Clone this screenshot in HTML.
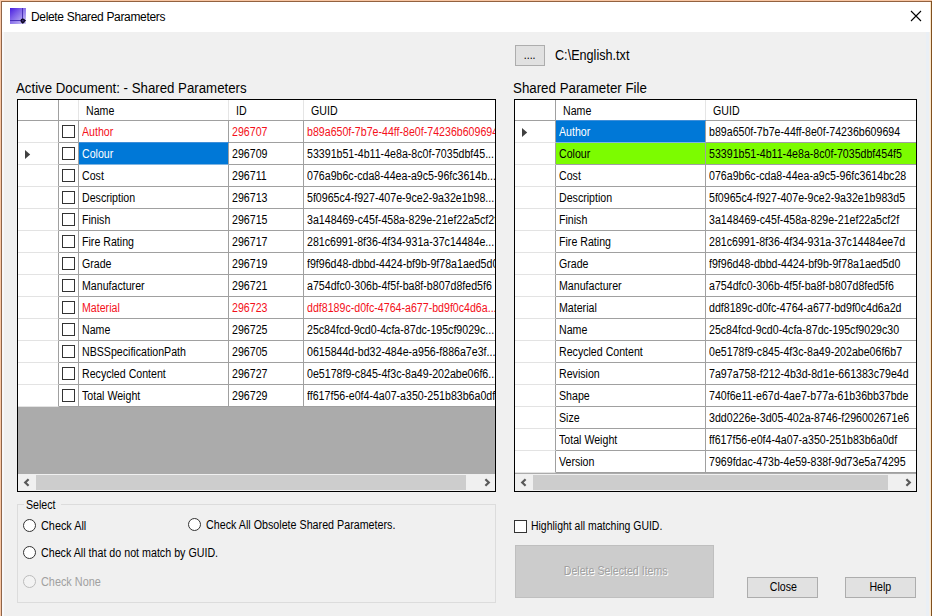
<!DOCTYPE html>
<html><head><meta charset="utf-8"><title>Delete Shared Parameters</title>
<style>
html,body{margin:0;padding:0}
body{width:932px;height:616px;overflow:hidden;background:#f0f0f0;position:relative;
 font-family:"Liberation Sans",sans-serif;font-size:12px;color:#000}
.x{display:inline-block;transform:scaleX(0.885);transform-origin:0 50%;white-space:nowrap}
.xc{display:inline-block;transform:scaleX(0.885);transform-origin:50% 50%;white-space:nowrap}
div,span{box-sizing:border-box}
.abs{position:absolute}
.t{position:absolute;white-space:nowrap;line-height:1}
#titlebar{left:2px;top:2px;width:929px;height:30px;background:#fff}
#title{left:31px;top:11px;font-size:12px;letter-spacing:-0.33px}
.lbl{font-size:14px;transform:scaleX(0.947);transform-origin:0 50%}
.grid{position:absolute;border:1px solid #000;background:#ababab;overflow:hidden}
.hdr{position:absolute;left:0;top:0;height:21px;background:#fff;border-bottom:1px solid #a0a0a0}
.hc{position:absolute;top:0;height:20px;border-right:1px solid #e5e5e5;line-height:20px;padding-left:7px;padding-top:1px;white-space:nowrap;overflow:hidden}
.hc0{border-right:1px solid #a0a0a0}
.row{position:absolute;left:0;height:22px;background:#fff}
.rh{position:absolute;left:0;top:0;height:22px;border-right:1px solid #a0a0a0;border-bottom:1px solid #e3e3e3;background:#fff}
.c{position:absolute;top:0;height:22px;border-right:1px solid #a0a0a0;border-bottom:1px solid #a0a0a0;line-height:21px;padding-left:3px;padding-top:1px;white-space:nowrap;overflow:hidden;background:#fff}
.red{color:#f4101a}
.sel{background:#0078d7;color:#fff;box-shadow:0 -1px 0 #3f8fd9;border-bottom-color:#7fb4e0}
.green{background:#7cfc00}
.cb{position:absolute;width:13px;height:13px;border:1px solid #333;background:#fff}
.tri{position:absolute;width:6px;height:10px}
.sb{position:absolute;left:0;height:17px;background:#f0f0f0}
.thumb{position:absolute;top:1px;height:15px;background:#cdcdcd}
.btn{position:absolute;border:1px solid #adadad;background:#e1e1e1;text-align:center}
.radio{position:absolute;width:13px;height:13px;border:1px solid #333;border-radius:50%;background:#fff}
</style></head>
<body>
<div class="abs" id="titlebar"></div>
<div class="abs" style="left:2px;top:32px;width:2px;height:584px;background:#f8f8fa"></div>
<div class="abs" style="left:926px;top:32px;width:3px;height:584px;background:#eaeff5"></div>
<div class="abs" style="left:929px;top:32px;width:1px;height:584px;background:#f5f0e9"></div>
<div class="abs" style="left:0;top:0;width:932px;height:1px;background:#f8c6a3"></div>
<div class="abs" style="left:1px;top:1px;width:931px;height:1px;background:#93623f"></div>
<div class="abs" style="left:0;top:0;width:1px;height:616px;background:#f8c6a3"></div>
<div class="abs" style="left:1px;top:1px;width:1px;height:615px;background:#8f6448"></div>
<div class="abs" style="left:930px;top:2px;width:1px;height:614px;background:#fde6c8"></div>
<div class="abs" style="left:931px;top:1px;width:1px;height:615px;background:#80501f"></div>
<svg class="abs" style="left:10px;top:8px" width="17" height="17" viewBox="0 0 17 17">
<defs><linearGradient id="ig" x1="0" y1="0" x2="1" y2="1"><stop offset="0" stop-color="#461ce0"/><stop offset="0.35" stop-color="#7b5de8"/><stop offset="0.7" stop-color="#a999f0"/><stop offset="1" stop-color="#d8d2f9"/></linearGradient></defs>
<rect x="0" y="0" width="16" height="16" fill="url(#ig)"/>
<rect x="12" y="0" width="1" height="12" fill="#3d25ae" opacity="0.85"/>
<rect x="0" y="12" width="12" height="1" fill="#3d25ae" opacity="0.85"/>
<circle cx="12.8" cy="12.8" r="1.7" fill="#3a2a78" stroke="#0d0820" stroke-width="1.3"/>
<path d="M14.8 12.6 H16 M12.8 14.8 V15.8" stroke="#0d0820" stroke-width="0.9"/>
</svg>
<div class="t" id="title">Delete Shared Parameters</div>
<svg class="abs" style="left:910px;top:10px" width="12" height="12" viewBox="0 0 12 12"><path d="M1 1 L11 11 M11 1 L1 11" stroke="#000" stroke-width="1.1" fill="none"/></svg>
<div class="t lbl" id="lblL" style="left:16px;top:81px">Active Document: - Shared Parameters</div>
<div class="t lbl" id="lblR" style="left:513px;top:81px;transform:scaleX(0.951)">Shared Parameter File</div>
<div class="btn" style="left:515px;top:45px;width:30px;height:21px;line-height:19px"><span class="xc">....</span></div>
<div class="t lbl" id="lblF" style="left:555px;top:48px;transform:scaleX(0.902)">C:\English.txt</div>
<div class="grid" id="gridL" style="left:17px;top:99px;width:479px;height:393px">
<div class="hdr" style="width:477px">
<div class="hc hc0" style="left:0;width:41px"></div>
<div class="hc" style="left:41px;width:20px"></div>
<div class="hc" style="left:61px;width:150px"><span class="x">Name</span></div>
<div class="hc" style="left:211px;width:75px"><span class="x">ID</span></div>
<div class="hc" style="left:286px;width:200px;border-right:none"><span class="x">GUID</span></div>
</div>
<div class="row" style="top:21px;width:477px">
<div class="rh" style="width:41px"></div>
<div class="c" style="left:41px;width:20px"></div><div class="cb" style="left:44px;top:4px"></div>
<div class="c red" style="left:61px;width:150px"><span class="x">Author</span></div>
<div class="c red" style="left:211px;width:75px"><span class="x">296707</span></div>
<div class="c red" style="left:286px;width:200px;border-right:none"><span class="x">b89a650f-7b7e-44ff-8e0f-74236b609694</span></div>
</div>
<div class="row" style="top:43px;width:477px">
<div class="rh" style="width:41px"></div>
<svg class="tri" style="left:7px;top:7px" width="6" height="10" viewBox="0 0 6 10"><polygon points="0,0 5.2,4.5 0,9" fill="#404040"/></svg>
<div class="c" style="left:41px;width:20px"></div><div class="cb" style="left:44px;top:4px"></div>
<div class="c sel" style="left:61px;width:150px"><span class="x">Colour</span></div>
<div class="c" style="left:211px;width:75px"><span class="x">296709</span></div>
<div class="c" style="left:286px;width:200px;border-right:none"><span class="x">53391b51-4b11-4e8a-8c0f-7035dbf45...</span></div>
</div>
<div class="row" style="top:65px;width:477px">
<div class="rh" style="width:41px"></div>
<div class="c" style="left:41px;width:20px"></div><div class="cb" style="left:44px;top:4px"></div>
<div class="c" style="left:61px;width:150px"><span class="x">Cost</span></div>
<div class="c" style="left:211px;width:75px"><span class="x">296711</span></div>
<div class="c" style="left:286px;width:200px;border-right:none"><span class="x">076a9b6c-cda8-44ea-a9c5-96fc3614b...</span></div>
</div>
<div class="row" style="top:87px;width:477px">
<div class="rh" style="width:41px"></div>
<div class="c" style="left:41px;width:20px"></div><div class="cb" style="left:44px;top:4px"></div>
<div class="c" style="left:61px;width:150px"><span class="x">Description</span></div>
<div class="c" style="left:211px;width:75px"><span class="x">296713</span></div>
<div class="c" style="left:286px;width:200px;border-right:none"><span class="x">5f0965c4-f927-407e-9ce2-9a32e1b98...</span></div>
</div>
<div class="row" style="top:109px;width:477px">
<div class="rh" style="width:41px"></div>
<div class="c" style="left:41px;width:20px"></div><div class="cb" style="left:44px;top:4px"></div>
<div class="c" style="left:61px;width:150px"><span class="x">Finish</span></div>
<div class="c" style="left:211px;width:75px"><span class="x">296715</span></div>
<div class="c" style="left:286px;width:200px;border-right:none"><span class="x">3a148469-c45f-458a-829e-21ef22a5cf2f</span></div>
</div>
<div class="row" style="top:131px;width:477px">
<div class="rh" style="width:41px"></div>
<div class="c" style="left:41px;width:20px"></div><div class="cb" style="left:44px;top:4px"></div>
<div class="c" style="left:61px;width:150px"><span class="x">Fire Rating</span></div>
<div class="c" style="left:211px;width:75px"><span class="x">296717</span></div>
<div class="c" style="left:286px;width:200px;border-right:none"><span class="x">281c6991-8f36-4f34-931a-37c14484e...</span></div>
</div>
<div class="row" style="top:153px;width:477px">
<div class="rh" style="width:41px"></div>
<div class="c" style="left:41px;width:20px"></div><div class="cb" style="left:44px;top:4px"></div>
<div class="c" style="left:61px;width:150px"><span class="x">Grade</span></div>
<div class="c" style="left:211px;width:75px"><span class="x">296719</span></div>
<div class="c" style="left:286px;width:200px;border-right:none"><span class="x">f9f96d48-dbbd-4424-bf9b-9f78a1aed5d0</span></div>
</div>
<div class="row" style="top:175px;width:477px">
<div class="rh" style="width:41px"></div>
<div class="c" style="left:41px;width:20px"></div><div class="cb" style="left:44px;top:4px"></div>
<div class="c" style="left:61px;width:150px"><span class="x">Manufacturer</span></div>
<div class="c" style="left:211px;width:75px"><span class="x">296721</span></div>
<div class="c" style="left:286px;width:200px;border-right:none"><span class="x">a754dfc0-306b-4f5f-ba8f-b807d8fed5f6</span></div>
</div>
<div class="row" style="top:197px;width:477px">
<div class="rh" style="width:41px"></div>
<div class="c" style="left:41px;width:20px"></div><div class="cb" style="left:44px;top:4px"></div>
<div class="c red" style="left:61px;width:150px"><span class="x">Material</span></div>
<div class="c red" style="left:211px;width:75px"><span class="x">296723</span></div>
<div class="c red" style="left:286px;width:200px;border-right:none"><span class="x">ddf8189c-d0fc-4764-a677-bd9f0c4d6a...</span></div>
</div>
<div class="row" style="top:219px;width:477px">
<div class="rh" style="width:41px"></div>
<div class="c" style="left:41px;width:20px"></div><div class="cb" style="left:44px;top:4px"></div>
<div class="c" style="left:61px;width:150px"><span class="x">Name</span></div>
<div class="c" style="left:211px;width:75px"><span class="x">296725</span></div>
<div class="c" style="left:286px;width:200px;border-right:none"><span class="x">25c84fcd-9cd0-4cfa-87dc-195cf9029c...</span></div>
</div>
<div class="row" style="top:241px;width:477px">
<div class="rh" style="width:41px"></div>
<div class="c" style="left:41px;width:20px"></div><div class="cb" style="left:44px;top:4px"></div>
<div class="c" style="left:61px;width:150px"><span class="x">NBSSpecificationPath</span></div>
<div class="c" style="left:211px;width:75px"><span class="x">296705</span></div>
<div class="c" style="left:286px;width:200px;border-right:none"><span class="x">0615844d-bd32-484e-a956-f886a7e3f...</span></div>
</div>
<div class="row" style="top:263px;width:477px">
<div class="rh" style="width:41px"></div>
<div class="c" style="left:41px;width:20px"></div><div class="cb" style="left:44px;top:4px"></div>
<div class="c" style="left:61px;width:150px"><span class="x">Recycled Content</span></div>
<div class="c" style="left:211px;width:75px"><span class="x">296727</span></div>
<div class="c" style="left:286px;width:200px;border-right:none"><span class="x">0e5178f9-c845-4f3c-8a49-202abe06f6...</span></div>
</div>
<div class="row" style="top:285px;width:477px">
<div class="rh" style="width:41px"></div>
<div class="c" style="left:41px;width:20px"></div><div class="cb" style="left:44px;top:4px"></div>
<div class="c" style="left:61px;width:150px"><span class="x">Total Weight</span></div>
<div class="c" style="left:211px;width:75px"><span class="x">296729</span></div>
<div class="c" style="left:286px;width:200px;border-right:none"><span class="x">ff617f56-e0f4-4a07-a350-251b83b6a0df</span></div>
</div>
<div class="sb" style="top:374px;width:477px"><div class="thumb" style="left:18px;width:430px"></div><svg class="abs" style="left:5px;top:4.0px" width="8" height="9" viewBox="0 0 8 9"><polyline points="5.6,1.2 2.2,4.5 5.6,7.8" fill="none" stroke="#5a5a5a" stroke-width="2.2"/></svg><svg class="abs" style="left:465px;top:4.0px" width="8" height="9" viewBox="0 0 8 9"><polyline points="2.4,1.2 5.8,4.5 2.4,7.8" fill="none" stroke="#5a5a5a" stroke-width="2.2"/></svg></div>
</div>
<div class="grid" id="gridR" style="left:514px;top:99px;width:403px;height:393px">
<div class="hdr" style="width:401px">
<div class="hc hc0" style="left:0;width:41px"></div>
<div class="hc" style="left:41px;width:150px"><span class="x">Name</span></div>
<div class="hc" style="left:191px;width:215px;border-right:none"><span class="x">GUID</span></div>
</div>
<div class="row" style="top:21px;width:401px">
<div class="rh" style="width:41px"></div>
<svg class="tri" style="left:7px;top:7px" width="6" height="10" viewBox="0 0 6 10"><polygon points="0,0 5.2,4.5 0,9" fill="#404040"/></svg>
<div class="c sel" style="left:41px;width:150px"><span class="x">Author</span></div>
<div class="c" style="left:191px;width:215px;border-right:none"><span class="x">b89a650f-7b7e-44ff-8e0f-74236b609694</span></div>
</div>
<div class="row" style="top:43px;width:401px">
<div class="rh" style="width:41px"></div>
<div class="c green" style="left:41px;width:150px"><span class="x">Colour</span></div>
<div class="c green" style="left:191px;width:215px;border-right:none"><span class="x">53391b51-4b11-4e8a-8c0f-7035dbf454f5</span></div>
</div>
<div class="row" style="top:65px;width:401px">
<div class="rh" style="width:41px"></div>
<div class="c" style="left:41px;width:150px"><span class="x">Cost</span></div>
<div class="c" style="left:191px;width:215px;border-right:none"><span class="x">076a9b6c-cda8-44ea-a9c5-96fc3614bc28</span></div>
</div>
<div class="row" style="top:87px;width:401px">
<div class="rh" style="width:41px"></div>
<div class="c" style="left:41px;width:150px"><span class="x">Description</span></div>
<div class="c" style="left:191px;width:215px;border-right:none"><span class="x">5f0965c4-f927-407e-9ce2-9a32e1b983d5</span></div>
</div>
<div class="row" style="top:109px;width:401px">
<div class="rh" style="width:41px"></div>
<div class="c" style="left:41px;width:150px"><span class="x">Finish</span></div>
<div class="c" style="left:191px;width:215px;border-right:none"><span class="x">3a148469-c45f-458a-829e-21ef22a5cf2f</span></div>
</div>
<div class="row" style="top:131px;width:401px">
<div class="rh" style="width:41px"></div>
<div class="c" style="left:41px;width:150px"><span class="x">Fire Rating</span></div>
<div class="c" style="left:191px;width:215px;border-right:none"><span class="x">281c6991-8f36-4f34-931a-37c14484ee7d</span></div>
</div>
<div class="row" style="top:153px;width:401px">
<div class="rh" style="width:41px"></div>
<div class="c" style="left:41px;width:150px"><span class="x">Grade</span></div>
<div class="c" style="left:191px;width:215px;border-right:none"><span class="x">f9f96d48-dbbd-4424-bf9b-9f78a1aed5d0</span></div>
</div>
<div class="row" style="top:175px;width:401px">
<div class="rh" style="width:41px"></div>
<div class="c" style="left:41px;width:150px"><span class="x">Manufacturer</span></div>
<div class="c" style="left:191px;width:215px;border-right:none"><span class="x">a754dfc0-306b-4f5f-ba8f-b807d8fed5f6</span></div>
</div>
<div class="row" style="top:197px;width:401px">
<div class="rh" style="width:41px"></div>
<div class="c" style="left:41px;width:150px"><span class="x">Material</span></div>
<div class="c" style="left:191px;width:215px;border-right:none"><span class="x">ddf8189c-d0fc-4764-a677-bd9f0c4d6a2d</span></div>
</div>
<div class="row" style="top:219px;width:401px">
<div class="rh" style="width:41px"></div>
<div class="c" style="left:41px;width:150px"><span class="x">Name</span></div>
<div class="c" style="left:191px;width:215px;border-right:none"><span class="x">25c84fcd-9cd0-4cfa-87dc-195cf9029c30</span></div>
</div>
<div class="row" style="top:241px;width:401px">
<div class="rh" style="width:41px"></div>
<div class="c" style="left:41px;width:150px"><span class="x">Recycled Content</span></div>
<div class="c" style="left:191px;width:215px;border-right:none"><span class="x">0e5178f9-c845-4f3c-8a49-202abe06f6b7</span></div>
</div>
<div class="row" style="top:263px;width:401px">
<div class="rh" style="width:41px"></div>
<div class="c" style="left:41px;width:150px"><span class="x">Revision</span></div>
<div class="c" style="left:191px;width:215px;border-right:none"><span class="x">7a97a758-f212-4b3d-8d1e-661383c79e4d</span></div>
</div>
<div class="row" style="top:285px;width:401px">
<div class="rh" style="width:41px"></div>
<div class="c" style="left:41px;width:150px"><span class="x">Shape</span></div>
<div class="c" style="left:191px;width:215px;border-right:none"><span class="x">740f6e11-e67d-4ae7-b77a-61b36bb37bde</span></div>
</div>
<div class="row" style="top:307px;width:401px">
<div class="rh" style="width:41px"></div>
<div class="c" style="left:41px;width:150px"><span class="x">Size</span></div>
<div class="c" style="left:191px;width:215px;border-right:none"><span class="x">3dd0226e-3d05-402a-8746-f296002671e6</span></div>
</div>
<div class="row" style="top:329px;width:401px">
<div class="rh" style="width:41px"></div>
<div class="c" style="left:41px;width:150px"><span class="x">Total Weight</span></div>
<div class="c" style="left:191px;width:215px;border-right:none"><span class="x">ff617f56-e0f4-4a07-a350-251b83b6a0df</span></div>
</div>
<div class="row" style="top:351px;width:401px">
<div class="rh" style="width:41px"></div>
<div class="c" style="left:41px;width:150px"><span class="x">Version</span></div>
<div class="c" style="left:191px;width:215px;border-right:none"><span class="x">7969fdac-473b-4e59-838f-9d73e5a74295</span></div>
</div>
<div class="sb" style="top:374px;width:401px"><div class="thumb" style="left:18px;width:355px"></div><svg class="abs" style="left:5px;top:4.0px" width="8" height="9" viewBox="0 0 8 9"><polyline points="5.6,1.2 2.2,4.5 5.6,7.8" fill="none" stroke="#5a5a5a" stroke-width="2.2"/></svg><svg class="abs" style="left:389px;top:4.0px" width="8" height="9" viewBox="0 0 8 9"><polyline points="2.4,1.2 5.8,4.5 2.4,7.8" fill="none" stroke="#5a5a5a" stroke-width="2.2"/></svg></div>
</div>
<div class="abs" style="left:17px;top:504px;width:479px;height:99px;border:1px solid #dcdcdc"></div>
<div class="t" style="left:24px;top:499px;background:#f0f0f0;padding:0 2px" id="gsel"><span class="x">Select</span></div>
<div class="radio" style="left:23px;top:519px;border-color:#333;background:#fff"></div>
<div class="t" id="r1" style="left:40.5px;top:520px;"><span class="x" style="transform:scaleX(0.905)">Check All</span></div>
<div class="radio" style="left:188px;top:518px;border-color:#333;background:#fff"></div>
<div class="t" id="r4" style="left:205.5px;top:519px;"><span class="x" style="transform:scaleX(0.893)">Check All Obsolete Shared Parameters.</span></div>
<div class="radio" style="left:23px;top:546px;border-color:#333;background:#fff"></div>
<div class="t" id="r2" style="left:40.5px;top:547px;"><span class="x" style="transform:scaleX(0.891)">Check All that do not match by GUID.</span></div>
<div class="radio" style="left:23px;top:575px;border-color:#bcbcbc;background:#f3f3f3"></div>
<div class="t" id="r3" style="left:40.5px;top:576px;color:#a0a0a0;"><span class="x" style="transform:scaleX(0.905)">Check None</span></div>
<div class="cb" style="left:514px;top:520px"></div>
<div class="t" id="hl" style="left:531px;top:520px"><span class="x" style="transform:scaleX(0.871)">Highlight all matching GUID.</span></div>
<div class="btn" style="left:515px;top:545px;width:199px;height:53px;background:#cccccc;border-color:#bfbfbf;line-height:51px;color:#a0a0a0;text-shadow:1px 1px 0 #fff" id="del"><span class="xc" style="position:relative;left:1px">Delete Selected Items</span></div>
<div class="btn" style="left:747px;top:577px;width:71px;height:21px;line-height:19px" id="bclose"><span class="xc" style="position:relative;left:1px">Close</span></div>
<div class="btn" style="left:845px;top:577px;width:71px;height:21px;line-height:19px" id="bhelp"><span class="xc">Help</span></div>
</body></html>
